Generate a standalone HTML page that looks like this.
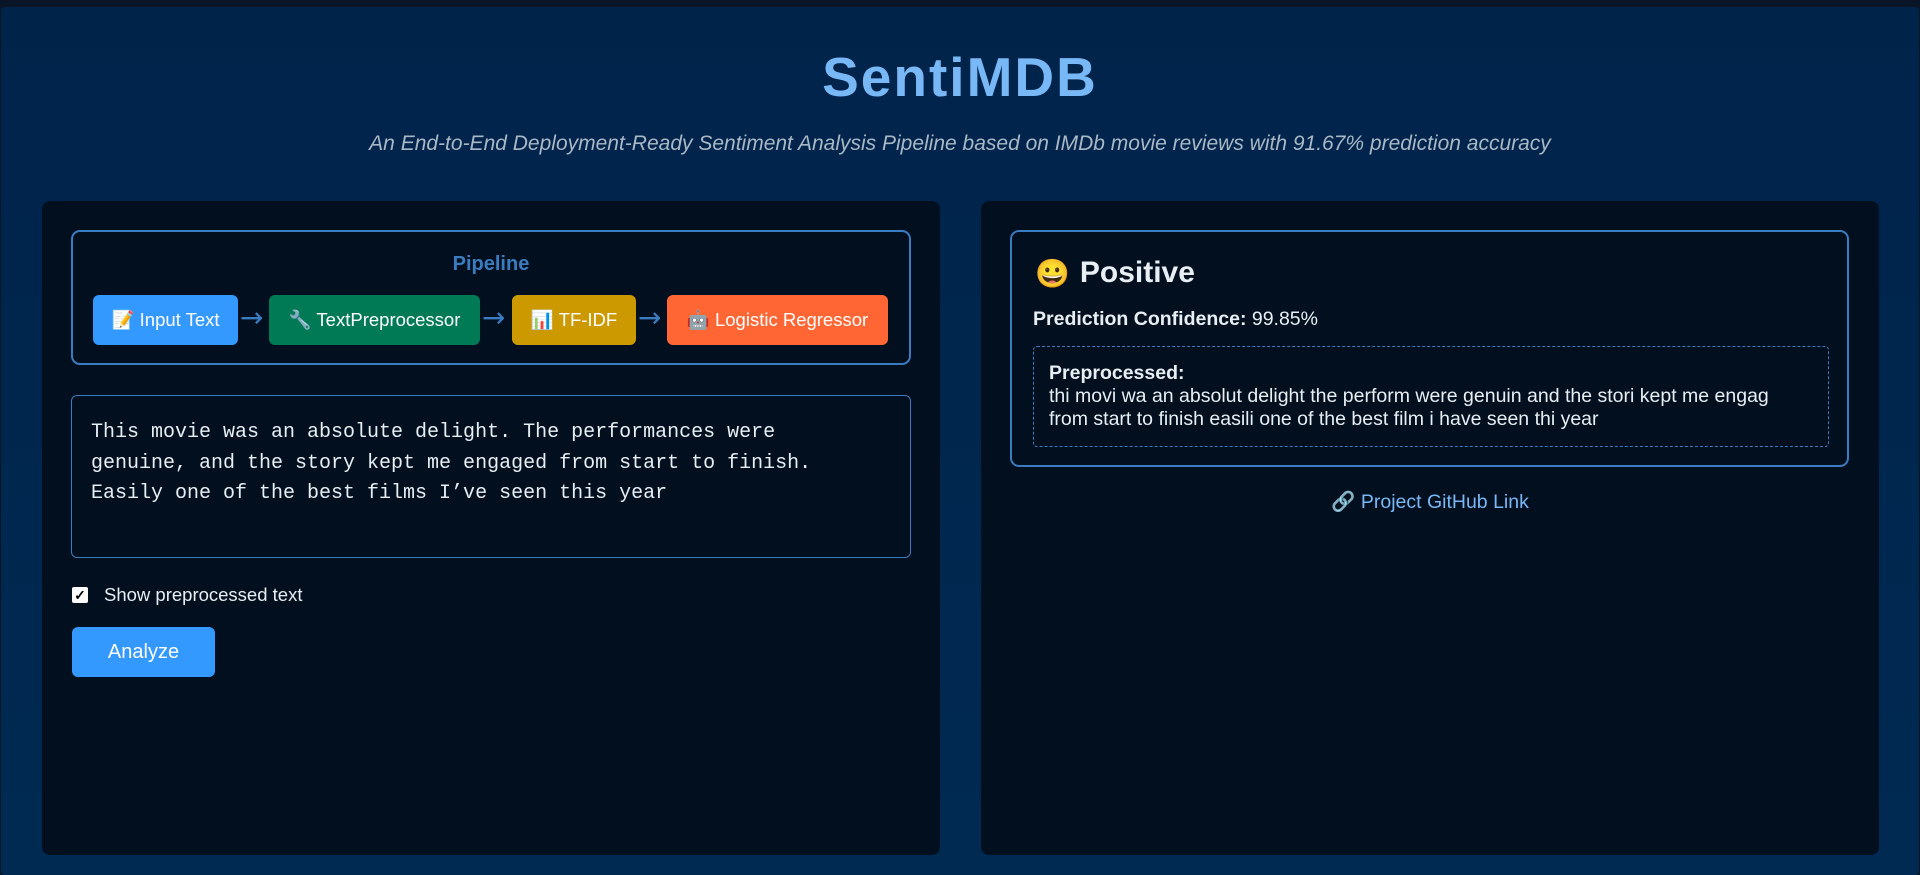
<!DOCTYPE html>
<html><head><meta charset="utf-8"><style>
*{box-sizing:border-box;margin:0;padding:0}
body{width:1920px;height:875px;background:#0a1628;font-family:"Liberation Sans",Arial,sans-serif;overflow:hidden;position:relative}
.frame{position:absolute;left:1px;top:7px;width:1918px;height:868px;background:linear-gradient(#00234a,#002a52);border-radius:4px}
h1{position:absolute;top:38px;width:100%;text-align:center;font-size:55px;color:#79b8f6;letter-spacing:2px;font-weight:bold}
.sub{position:absolute;top:125px;width:100%;text-align:center;font-size:21px;font-style:italic;color:#aab8c6}
.panel{position:absolute;top:201px;width:898px;height:654px;background:#010f1f;border-radius:8px}
.pipe{position:absolute;left:29px;top:29px;width:840px;height:135px;border:2px solid #3a7cc0;border-radius:9px}
.pipe .t{position:absolute;top:21px;width:100%;text-align:center;color:#3a7cc0;font-weight:bold;font-size:20px}
.b{position:absolute;top:63px;height:50px;border-radius:6px;color:#fff;font-size:18.5px;line-height:50px;text-align:center}
.ar{position:absolute;top:63px;line-height:46px;color:#3a7cc0;font-size:28px;font-family:"DejaVu Sans",sans-serif}
.ta{position:absolute;left:29px;top:194px;width:840px;height:163px;border:1px solid #3a7cc0;border-radius:6px;padding:22px 60px 22px 19px;font-family:"Liberation Mono",monospace;font-size:20px;line-height:30.6px;color:#e8eef4}
.cb{position:absolute;left:71px;top:387px;width:16px;height:16px;background:#fff;border-radius:2px;color:#000;font-size:14px;line-height:16px;text-align:center;font-weight:bold}
.cbl{position:absolute;left:103px;top:384px;color:#e8eef4;font-size:18.5px}
.btn{position:absolute;left:71px;top:426px;width:143px;height:50px;background:#3399ff;border-radius:6px;color:#fff;font-size:20px;line-height:50px;text-align:center}
.card{position:absolute;left:29px;top:29px;width:839px;height:237px;border:2px solid #3a7cc0;border-radius:9px;color:#e8eef4}
.pos{position:absolute;left:23px;top:24px;font-size:30px;font-weight:bold;display:flex;align-items:center}
.conf{position:absolute;left:21px;top:76px;font-size:19.5px}
.dash{position:absolute;left:21px;top:114px;width:796px;height:101px;border:1px dashed #3a7cc0;border-radius:4px;padding:15px 15px;font-size:19.5px;line-height:23px}
.link{position:absolute;top:289px;width:100%;text-align:center;color:#79b8f6;font-size:19.5px}
</style></head><body>
<div class="frame">
<h1>SentiMDB</h1>
<div class="sub">An End-to-End Deployment-Ready Sentiment Analysis Pipeline based on IMDb movie reviews with 91.67% prediction accuracy</div>
<div class="panel" style="left:41px;top:194px">
 <div class="pipe"><div class="t">Pipeline</div>
  <div class="b" style="left:20px;width:145px;background:#3399ff">📝 Input Text</div>
  <div class="ar" style="left:167px">→</div>
  <div class="b" style="left:196px;width:211px;background:#007a55">🔧 TextPreprocessor</div>
  <div class="ar" style="left:409px">→</div>
  <div class="b" style="left:439px;width:124px;background:#cc9900">📊 TF-IDF</div>
  <div class="ar" style="left:565px">→</div>
  <div class="b" style="left:594px;width:221px;background:#ff6633">🤖 Logistic Regressor</div>
 </div>
 <div class="ta">This movie was an absolute delight. The performances were genuine, and the story kept me engaged from start to finish. Easily one of the best films I’ve seen this year</div>
</div>
<div class="cb" style="top:580px">✓</div>
<div class="cbl" style="top:577px">Show preprocessed text</div>
<div class="btn" style="top:620px">Analyze</div>
<div class="panel" style="left:980px;top:194px">
 <div class="card">
  <div class="pos"><span style="font-size:28px;margin-right:10px">😀</span>Positive</div>
  <div class="conf"><b>Prediction Confidence:</b> 99.85%</div>
  <div class="dash"><b>Preprocessed:</b><br>thi movi wa an absolut delight the perform were genuin and the stori kept me engag from start to finish easili one of the best film i have seen thi year</div>
 </div>
 <div class="link"><span style="color:#aaa">🔗</span> Project GitHub Link</div>
</div>
</div>
</body></html>
